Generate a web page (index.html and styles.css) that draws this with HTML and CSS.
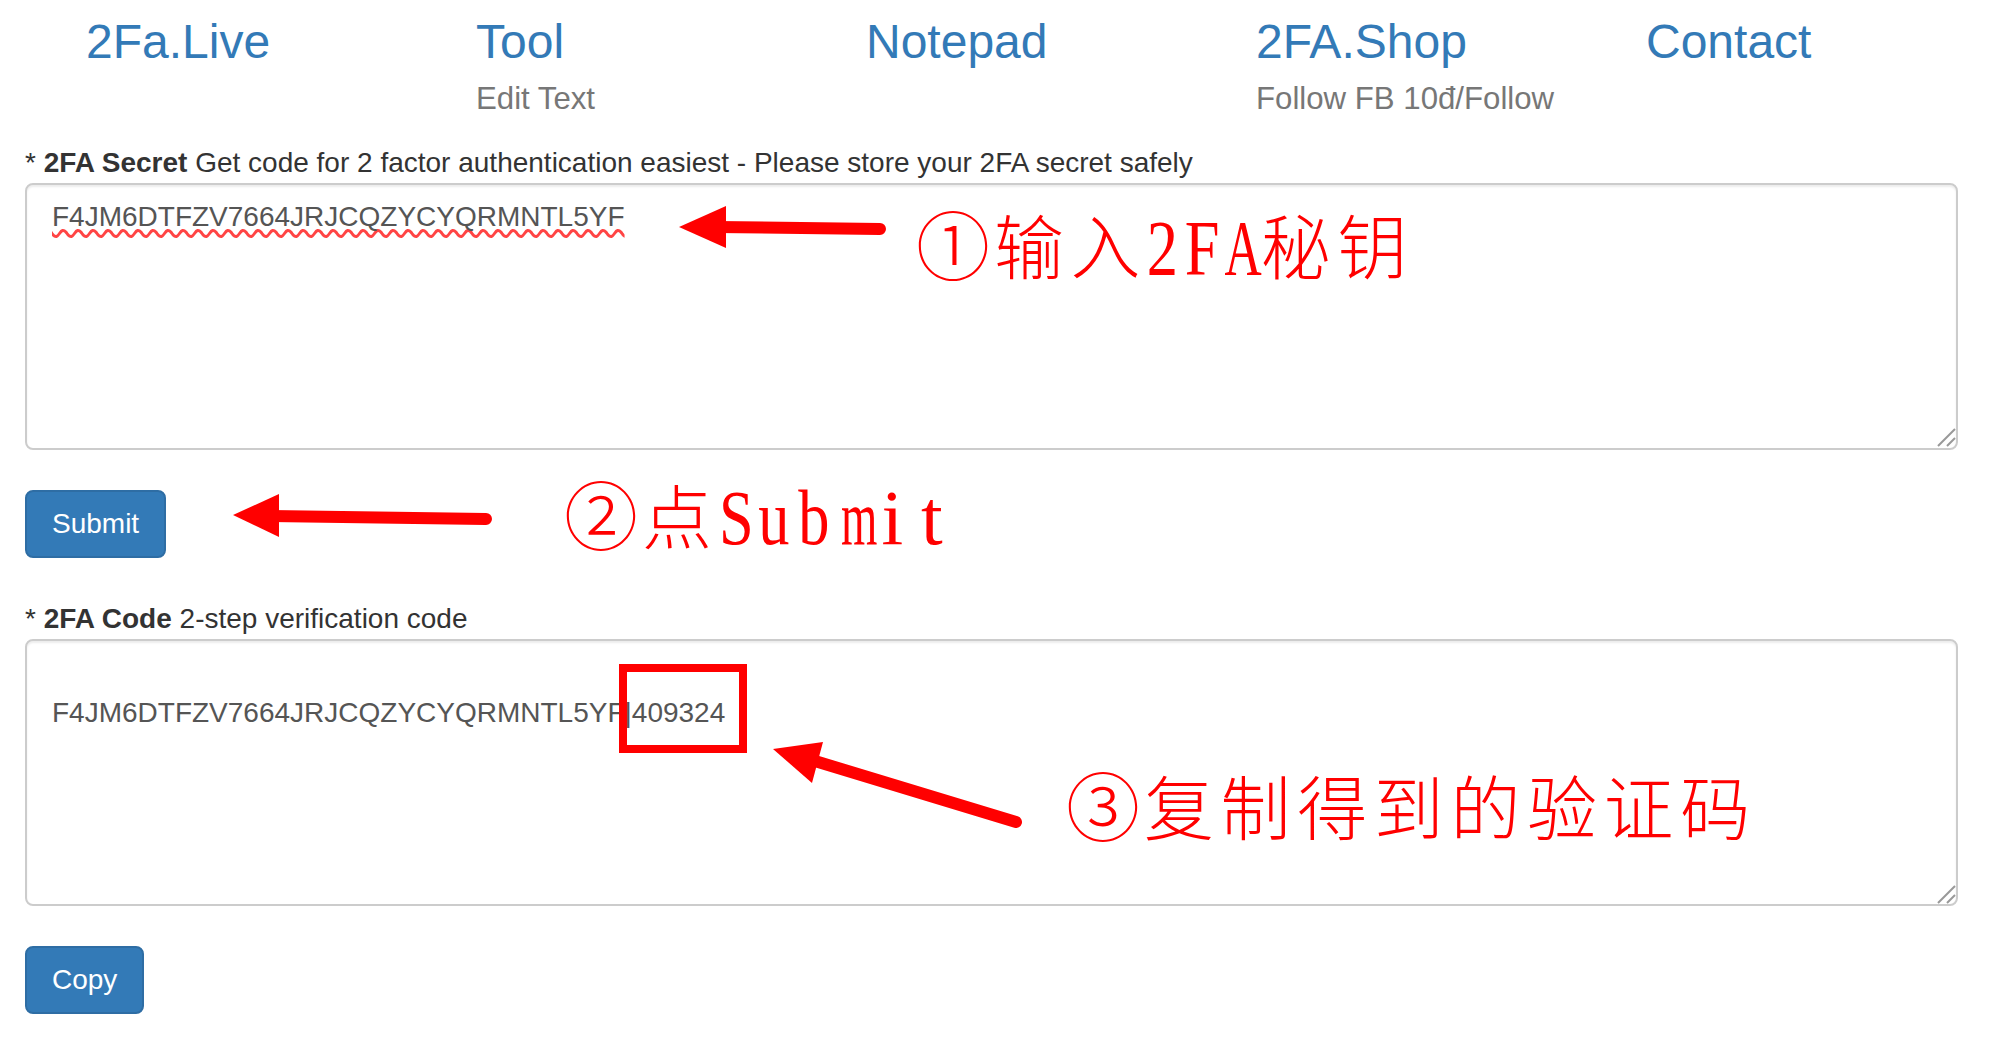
FILE: index.html
```html
<!DOCTYPE html>
<html lang="zh">
<head>
<meta charset="utf-8">
<title>2Fa.Live</title>
<link rel="stylesheet" href="styles.css">
</head>
<body>
<nav class="nav">
  <div class="nav-item"><a class="nav-link">2Fa.Live</a></div>
  <div class="nav-item"><a class="nav-link">Tool</a><span class="nav-sub">Edit Text</span></div>
  <div class="nav-item"><a class="nav-link">Notepad</a></div>
  <div class="nav-item"><a class="nav-link">2FA.Shop</a><span class="nav-sub">Follow FB 10đ/Follow</span></div>
  <div class="nav-item"><a class="nav-link">Contact</a></div>
</nav>
<main class="form">
  <label class="label">* <b>2FA Secret</b> Get code for 2 factor authentication easiest - Please store your 2FA secret safely</label>
  <textarea class="field field-misspelled" spellcheck="false">F4JM6DTFZV7664JRJCQZYCYQRMNTL5YF</textarea>
  <button class="btn btn-submit">Submit</button>
  <label class="label">* <b>2FA Code</b> 2-step verification code</label>
  <textarea class="field" spellcheck="false">

F4JM6DTFZV7664JRJCQZYCYQRMNTL5YF|409324</textarea>
  <button class="btn">Copy</button>
</main>
<svg class="marks" width="2007" height="1061" viewBox="0 0 2007 1061" aria-hidden="true">
  <path class="grip" d="M1938 446 L1955 429 M1947 446 L1955 438"/>
  <path class="grip" d="M1938 903 L1955 886 M1947 903 L1955 895"/>
  <path class="arrow-shaft" d="M716 227 L880 229"/>
  <path class="arrow-head" d="M679 227 L726 206 L726 248 Z"/>
  <path class="arrow-shaft" d="M270 516 L486 519"/>
  <path class="arrow-head" d="M233 515 L279 494 L279 537 Z"/>
  <path class="arrow-shaft" d="M805 758 L1016 822"/>
  <path class="arrow-head" d="M773 749 L823 742 L812 783 Z"/>
  <rect class="box" x="623" y="668" width="120" height="81"/>
</svg>
<p class="note note-1"><span class="num">①</span>输入<span class="hw hw-first">2</span><span class="hw">F</span><span class="hw hw-a">A</span>秘钥</p>
<p class="note note-2"><span class="num">②</span>点<span class="hw hw-first">S</span><span class="hw">u</span><span class="hw">b</span><span class="hw hw-wide">m</span><span class="hw hw-slim">i</span><span class="hw hw-slim">t</span></p>
<p class="note note-3"><span class="num">③</span>复制得到的验证码</p>
</body>
</html>
```
FILE: styles.css
```css
* { box-sizing: border-box; }
html, body { margin: 0; background: #fff; }
body {
  position: relative;
  width: 2007px;
  height: 1061px;
  overflow: hidden;
  font-family: "Liberation Sans", Arial, sans-serif;
  color: #333;
}
.nav {
  display: flex;
  padding-left: 86px;
  height: 140px;
}
.nav-item {
  flex: none;
  width: 390px;
  display: flex;
  flex-direction: column;
  padding-top: 15px;
}
.nav-link {
  font-size: 48px;
  line-height: 54px;
  color: #337ab7;
}
.nav-sub {
  font-size: 31.2px;
  line-height: 42px;
  color: #777;
  margin-top: 9px;
}
.form {
  display: flex;
  flex-direction: column;
  align-items: flex-start;
  padding: 0 49px 0 25px;
}
.label {
  font-size: 28px;
  line-height: 45px;
  height: 43px;
  color: #333;
  white-space: nowrap;
}
.label b { font-weight: 700; }
.field {
  display: block;
  width: 100%;
  height: 267px;
  padding: 12px 25px;
  border: 2px solid #ccc;
  border-radius: 8px;
  box-shadow: inset 0 2px 2px rgba(0, 0, 0, .075);
  font-family: "Liberation Sans", Arial, sans-serif;
  font-size: 28px;
  line-height: 40px;
  color: #555;
  outline: none;
  resize: none;
}
.field-misspelled {
  text-decoration: underline wavy #f44;
  text-decoration-thickness: 2.5px;
  text-decoration-skip-ink: none;
  text-underline-offset: 3px;
}
.btn {
  height: 68px;
  margin-top: 40px;
  padding: 0 25px;
  border: 2px solid #2e6da4;
  border-radius: 8px;
  background: #337ab7;
  color: #fff;
  font-family: "Liberation Sans", Arial, sans-serif;
  font-size: 28px;
}
.btn-submit { margin-bottom: 38px; }
.marks {
  position: absolute;
  left: 0;
  top: 0;
  pointer-events: none;
}
.grip {
  fill: none;
  stroke: #999;
  stroke-width: 2px;
}
.arrow-shaft {
  fill: none;
  stroke: #f00;
  stroke-width: 12px;
  stroke-linecap: round;
}
.arrow-head { fill: #f00; }
.box {
  fill: none;
  stroke: #f00;
  stroke-width: 8px;
}
.note {
  position: absolute;
  margin: 0;
  font-family: "Noto Sans CJK SC", sans-serif;
  font-weight: 300;
  font-size: 70px;
  line-height: 80px;
  letter-spacing: 6.6px;
  color: #f00;
  white-space: nowrap;
}
.note-1 { left: 916px; top: 202px; }
.note-2 { left: 564px; top: 472px; }
.note-3 { left: 1066px; top: 763px; }
.num {
  display: inline-block;
  width: 78px;
  letter-spacing: 0;
  font-size: 74px;
}
.hw {
  display: inline-block;
  width: 37.5px;
  text-align: center;
  letter-spacing: 0;
  font-family: "Liberation Serif", serif;
  font-size: 78px;
  transform: scaleX(.8);
}
.note-2 .hw { width: 39.5px; }
.hw-first { margin-left: -4px; }
.hw-a { transform: scaleX(.66); margin-right: 5px; }
.hw-wide { transform: scaleX(.6); }
.hw-slim { transform: none; }
```
